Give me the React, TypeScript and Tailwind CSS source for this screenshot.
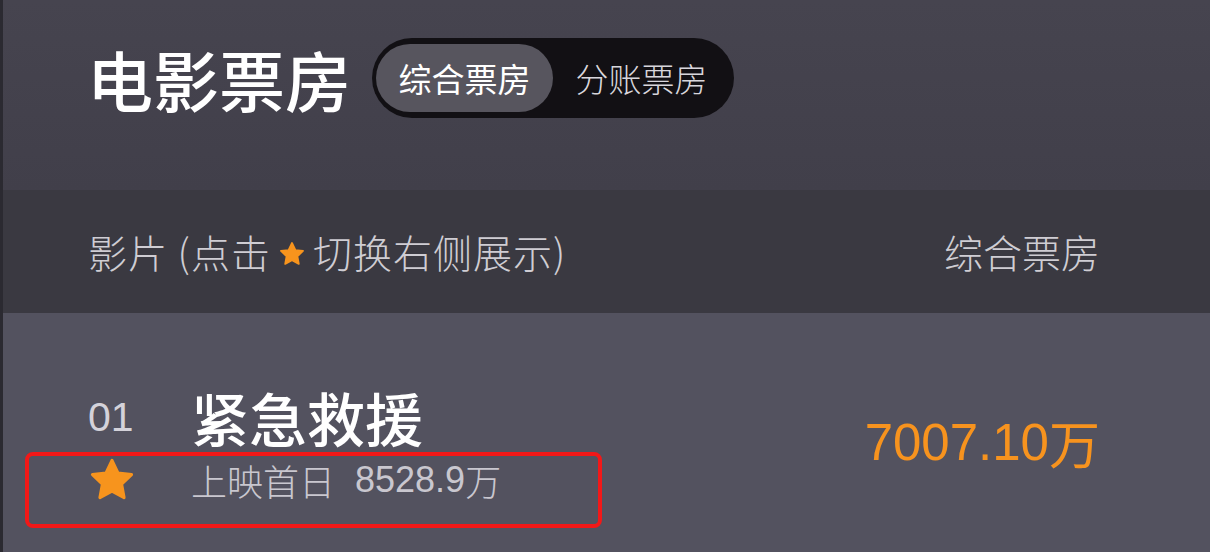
import React from "react";

const Star = ({ size }: { size: number }) => (
  <svg width={size} height={size} viewBox="0 0 24 24">
    <path
      d="M12 1.8l3.1 6.5 7.1.9-5.2 4.9 1.3 7.1L12 17.8l-6.3 3.4 1.3-7.1L1.8 9.2l7.1-.9z"
      fill="#f7941d"
      stroke="#f7941d"
      strokeWidth="1.6"
      strokeLinejoin="round"
    />
  </svg>
);

const font = { fontFamily: '"Liberation Sans", "Noto Sans CJK SC", sans-serif' };
const cjk = { fontFamily: '"Noto Sans CJK SC", sans-serif' };

export default function App() {
  return (
    <div className="w-[1210px] h-[552px] overflow-hidden flex bg-[#2b2a31]" style={font}>
      <div className="w-[3px] bg-[#2b2a31]" />
      <div className="flex-1 flex flex-col relative">
        <div className="h-[190px] bg-gradient-to-b from-[#46444f] to-[#413f4a] flex items-start pt-[38px] pl-[84px] gap-[21px]">
          <div className="h-[80px] flex items-center text-[66px] leading-none text-white font-medium" style={cjk}>
            电影票房
          </div>
          <div className="h-[80px] w-[362px] rounded-full bg-[#121014] flex items-center px-[4px]">
            <div className="h-[68px] w-[177px] rounded-full bg-[#57555e] flex items-center justify-center text-[33px] leading-none text-white" style={cjk}>
              综合票房
            </div>
            <div className="flex-1 flex items-center justify-center text-[33px] leading-none text-[#d8d6dc] font-light" style={cjk}>
              分账票房
            </div>
          </div>
        </div>
        <div className="h-[123px] bg-[#3a3941] flex items-center justify-between pl-[85px] pr-[110px] text-[39px] leading-none text-[#cfcdd3] font-light" style={cjk}>
          <div className="flex items-center tracking-[1px]">
            <span>影片 (点击</span>
            <span className="mx-[8px] mt-[4px]"><Star size={26} /></span>
            <span>切换右侧展示)</span>
          </div>
          <div>综合票房</div>
        </div>
        <div className="flex-1 bg-[#53525f] flex items-center justify-between pl-[85px] pr-[110px] pt-[25px]">
          <div className="flex flex-col">
            <div className="flex items-center h-[60px]">
              <div className="w-[103px] text-[41px] leading-none text-[#d4d2da]">01</div>
              <div className="text-[58px] leading-none text-white font-medium" style={cjk}>紧急救援</div>
            </div>
            <div className="flex items-center h-[46px] mt-[10px]">
              <div className="w-[103px] pl-[1px]"><Star size={46} /></div>
              <div className="flex items-center text-[36px] leading-none text-[#c9c7cf] font-light">
                <span style={cjk}>上映首日</span>
                <span className="ml-[20px]">8528.9</span>
                <span style={cjk}>万</span>
              </div>
            </div>
          </div>
          <div className="flex items-center text-[51px] leading-none text-[#f7931e] mt-[-6px]">
            <span>7007.10</span>
            <span style={cjk}>万</span>
          </div>
        </div>
        <div className="absolute left-[22px] top-[452px] w-[577px] h-[76px] border-[4px] border-[#f21818] rounded-[8px]" />
      </div>
    </div>
  );
}
